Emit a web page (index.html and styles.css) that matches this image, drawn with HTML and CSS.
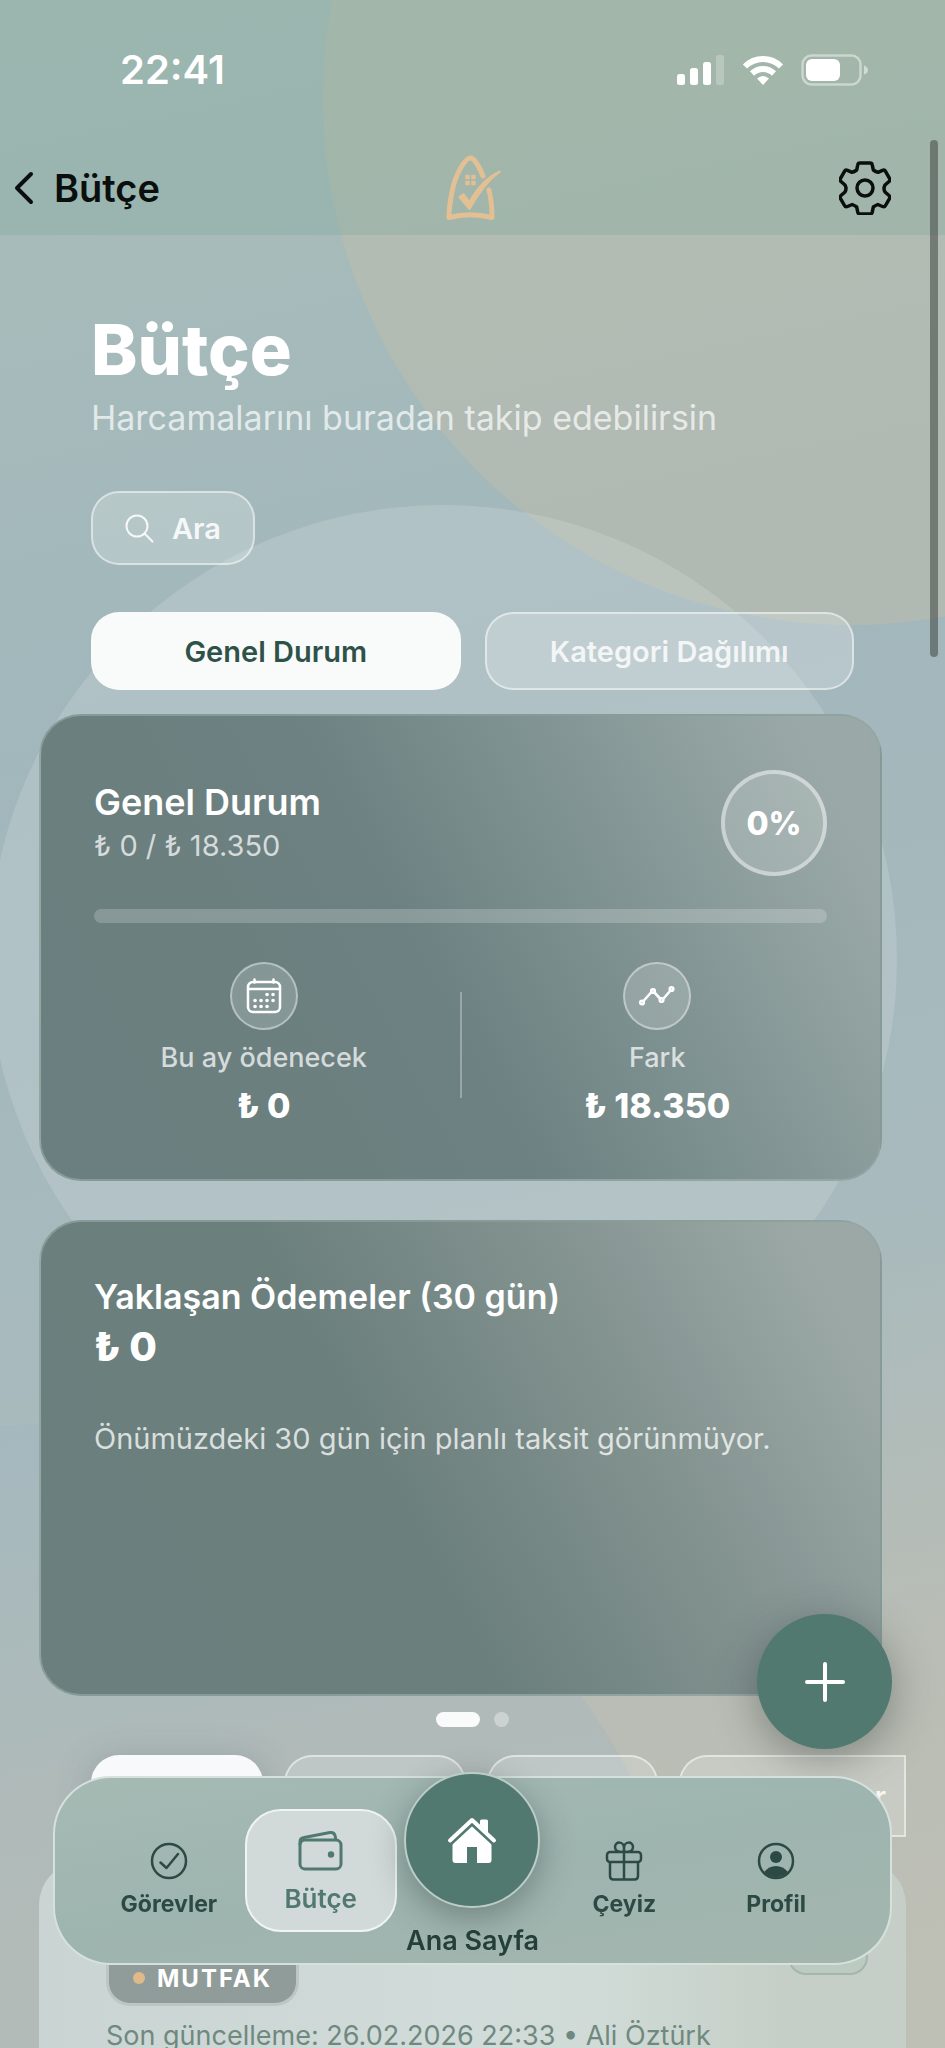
FILE: index.html
```html
<!DOCTYPE html>
<html lang="tr">
<head>
<meta charset="utf-8">
<meta name="viewport" content="width=device-width, initial-scale=1">
<title>Bütçe</title>
<link rel="stylesheet" href="styles.css">
</head>
<body>
<div class="screen">
  <div class="bubble bubble-sand"></div>
  <div class="bubble bubble-light"></div>
  <div class="bubble bubble-blue"></div>

  <header class="topbar">
    <div class="status">
      <span class="clock">22:41</span>
      <div class="status-icons">
        <svg width="48" height="31" viewBox="0 0 48 31" fill="#fff">
          <rect x="0" y="19" width="8" height="11" rx="2.5"/>
          <rect x="13" y="13" width="8" height="17" rx="2.5"/>
          <rect x="26" y="7" width="8" height="23" rx="2.5"/>
          <rect x="39" y="0" width="8" height="30" rx="2.5" opacity=".25"/>
        </svg>
        <svg width="42" height="31" viewBox="0 0 42 31">
          <path d="M3 11.5C13 1.5 29 1.500 39 11.500" fill="none" stroke="#fff" stroke-width="6"/>
          <path d="M10 18.500C16.500 12.500 25.500 12.500 32 18.500" fill="none" stroke="#fff" stroke-width="6"/>
          <path d="M15 23.500Q21 18.500 27 23.500L21 30Z" fill="#fff"/>
        </svg>
        <svg width="68" height="32" viewBox="0 0 68 32">
          <rect x="1.500" y="1.500" width="58" height="29" rx="9" fill="none" stroke="#fff" stroke-opacity=".45" stroke-width="2.500"/>
          <rect x="5" y="5" width="34" height="22" rx="6" fill="#fff"/>
          <path d="M63 11.500q4 1.500 4 4.500t-4 4.500z" fill="#fff" fill-opacity=".5"/>
        </svg>
      </div>
    </div>
    <div class="navbar">
      <button class="back" type="button">
        <svg width="20" height="34" viewBox="0 0 20 34" fill="none" stroke="currentColor" stroke-width="4" stroke-linecap="round" stroke-linejoin="round"><path d="M17 3L3 17l14 14"/></svg>
        <span>Bütçe</span>
      </button>
      <svg class="logo" width="56" height="68" viewBox="0 0 56 68" fill="none" stroke="#e3bf94" stroke-linejoin="round" stroke-linecap="round">
        <path d="M38 22C34 12 29 4 25.500 4C20 4 10 21 7 38C4.500 50 4 58 4 63.500Q25 58 47 63.500Q47 48 44 36" stroke-width="5"/>
        <path d="M14.500 43L18.500 40L24.500 48C30 38 40 24 55 17.500C43 26 33 40 24.500 55Z" fill="#e3bf94" stroke-width="2"/>
        <path d="M22.500 23v.1M28.500 23v.1M22.500 29v.1M28.500 29v.1" stroke-width="4.500" stroke-linecap="square"/>
      </svg>
      <button class="settings" type="button" aria-label="Ayarlar">
        <svg width="52" height="54" viewBox="0 0 52 54" fill="none" stroke="currentColor" stroke-width="3.500" stroke-linejoin="round"><path d="M21 2h10q2 0 2.300 2l1 5q2.500 1.800 4.700 2.300l4.500-2q2-.8 3 1l4 7.200q1 1.800-.5 3l-4 3.500q-1 2-1 3.500t1 3.500l4 3.500q1.500 1.200.5 3l-4 7q-1 1.800-3 1l-4.700-2q-2.500 1-4.500 2.500l-1 5q-.3 2-2.300 2H21q-2 0-2.300-2l-1-5q-2-1.500-4.500-2.500l-4.700 2q-2 .8-3-1l-4-7q-1-1.800.5-3l4-3.500q1-2 1-3.500t-1-3.500l-4-3.500q-1.500-1.200-.5-3l4-7.200q1-1.800 3-1l4.500 2q2.200-.5 4.700-2.300l1-5Q19 2 21 2Z"/><circle cx="26" cy="27" r="8"/></svg>
      </button>
    </div>
  </header>

  <main class="content">
    <section class="intro">
      <h1>Bütçe</h1>
      <p>Harcamalarını buradan takip edebilirsin</p>
      <button class="search" type="button">
        <svg width="29" height="29" viewBox="0 0 29 29" fill="none" stroke="currentColor" stroke-width="2" stroke-linecap="round"><circle cx="12" cy="12" r="10.500"/><path d="M19.500 19.500L27.500 27.500"/></svg>
        <span>Ara</span>
      </button>
      <div class="tabs">
        <button class="tab tab-active" type="button">Genel Durum</button>
        <button class="tab" type="button">Kategori Dağılımı</button>
      </div>
    </section>

    <section class="card overview">
      <div class="overview-head">
        <div>
          <h2>Genel Durum</h2>
          <p>₺ 0 / ₺ 18.350</p>
        </div>
        <div class="percent">0%</div>
      </div>
      <div class="bar"></div>
      <div class="stats">
        <div class="stat">
          <span class="stat-icon">
            <svg width="36" height="36" viewBox="0 0 36 36" fill="none" stroke="#fff" stroke-width="2.500" stroke-linecap="round"><rect x="2" y="4" width="32" height="30" rx="5"/><path d="M2 11h32M8.500 1.500v3M27.500 1.500v3"/><path d="M21 16.500h.1M27 16.500h.1M9 22.500h.1M15 22.500h.1M21 22.500h.1M27 22.500h.1M9 28.500h.1M15 28.500h.1M21 28.500h.1" stroke-width="3.600"/></svg>
          </span>
          <span class="stat-label">Bu ay ödenecek</span>
          <strong>₺ 0</strong>
        </div>
        <div class="divider"></div>
        <div class="stat">
          <span class="stat-icon">
            <svg width="36" height="36" viewBox="0 0 36 36" fill="none" stroke="#fff" stroke-width="2.600" stroke-linecap="round" stroke-linejoin="round"><path d="M4.500 23L12 14.500M15.500 14.500L21 20.500M24.500 20.500L31.500 12.500"/><circle cx="3" cy="24.500" r="1.800"/><circle cx="14" cy="13" r="1.800"/><circle cx="22.500" cy="22" r="1.800"/><circle cx="32.500" cy="11" r="1.800"/></svg>
          </span>
          <span class="stat-label">Fark</span>
          <strong>₺ 18.350</strong>
        </div>
      </div>
    </section>

    <section class="card upcoming">
      <h2>Yaklaşan Ödemeler (30 gün)</h2>
      <strong>₺ 0</strong>
      <p>Önümüzdeki 30 gün için planlı taksit görünmüyor.</p>
    </section>

    <div class="dots"><span class="dot dot-active"></span><span class="dot"></span></div>

    <div class="chips">
      <button class="chip chip-active" type="button" aria-label="Filtre 1"></button>
      <button class="chip" type="button" aria-label="Filtre 2"></button>
      <button class="chip chip-short" type="button" aria-label="Filtre 3"></button>
      <button class="chip chip-last" type="button">r</button>
    </div>

    <article class="entry">
      <div class="entry-head">
        <span class="badge"><i></i>MUTFAK</span>
        <span class="pill"></span>
      </div>
      <p>Son güncelleme: 26.02.2026 22:33 • Ali Öztürk</p>
    </article>
  </main>

  <div class="scrollbar"></div>

  <button class="fab" type="button" aria-label="Ekle">
    <svg width="40" height="40" viewBox="0 0 40 40" stroke="#fff" stroke-width="4" stroke-linecap="round"><path d="M20 2v36M2 20h36"/></svg>
  </button>

  <nav class="dock">
    <a class="item" href="#gorevler">
      <svg width="40" height="40" viewBox="0 0 40 40" fill="none" stroke="currentColor" stroke-width="2.500" stroke-linecap="round" stroke-linejoin="round"><circle cx="20" cy="20" r="17"/><path d="M11.500 21.500l6 5.500L29 13"/></svg>
      <span>Görevler</span>
    </a>
    <a class="item item-active" href="#butce">
      <svg width="46" height="42" viewBox="0 0 46 42" fill="none" stroke="currentColor" stroke-width="3" stroke-linejoin="round"><rect x="2" y="10" width="41" height="29" rx="5"/><path d="M2 15V12q0-4 4-4.500L32 2.500q4-.5 5 3L38 10"/><circle cx="33" cy="24.500" r="3.200" fill="currentColor" stroke="none"/></svg>
      <span>Bütçe</span>
    </a>
    <a class="item item-home" href="#ana">
      <span class="home">
        <svg width="50" height="48" viewBox="0 0 50 48" fill="#fff"><path d="M33 9V5q0-1.500 1.500-1.500h5Q41 3.500 41 5v12Z"/><path d="M3 24.500L25 4L47 24.500" fill="none" stroke="#fff" stroke-width="4" stroke-linecap="round" stroke-linejoin="round"/><path d="M25 9L44.500 27V44q0 3-3 3H30V31H20V47H8.500q-3 0-3-3V27Z"/><path d="M4 28.500L25 9L46 28.500" fill="none" stroke="#52796f" stroke-width="2"/></svg>
      </span>
      <span>Ana Sayfa</span>
    </a>
    <a class="item" href="#ceyiz">
      <svg width="40" height="40" viewBox="0 0 40 40" fill="none" stroke="currentColor" stroke-width="2.500" stroke-linejoin="round"><rect x="3" y="11" width="34" height="10" rx="3"/><path d="M6 21v14q0 3.500 3.500 3.500h21q3.500 0 3.500-3.500V21M20 11v27M20 11c-6 0-9-1-9-5 0-6 9-6 9 1zM20 11c6 0 9-1 9-5 0-6-9-6-9 1z"/></svg>
      <span>Çeyiz</span>
    </a>
    <a class="item" href="#profil">
      <svg width="40" height="40" viewBox="0 0 40 40" fill="currentColor"><circle cx="20" cy="20" r="17" fill="none" stroke="currentColor" stroke-width="2.500"/><circle cx="20" cy="16" r="6"/><path d="M8 31q5-6 12-6t12 6a16.500 16.500 0 0 1-24 0z"/></svg>
      <span>Profil</span>
    </a>
  </nav>
</div>
</body>
</html>
```
FILE: styles.css
```css
* { box-sizing: border-box; }

body {
  margin: 0;
  font-family: Inter, "Noto Sans", "Liberation Sans", sans-serif;
  background: #a6b9bd;
}

h1, h2, p { margin: 0; }
button { font: inherit; color: inherit; cursor: pointer; }
svg { display: block; flex: none; }

.screen {
  position: relative;
  height: 100vh;
  overflow: hidden;
  background: linear-gradient(168deg, #a9bdb9 0%, #a2b7bc 34%, #a8babd 62%, #b9bdb5 82%, #bfc0b5 100%);
}

.bubble { position: absolute; border-radius: 50%; }
.bubble-sand { width: 1054px; height: 1054px; right: -432px; top: -429px; background: rgba(212, 193, 158, .28); }
.bubble-light { width: 908px; height: 908px; left: -11px; top: 505px; background: rgba(255, 255, 255, .14); }
.bubble-blue { width: 1310px; height: 1310px; left: -605px; top: 1424px; background: rgba(150, 178, 198, .24); }

.topbar { position: relative; height: 235px; background: rgba(128, 167, 156, .32); }
.status {
  display: flex;
  align-items: center;
  justify-content: space-between;
  height: 140px;
  padding: 0 76px 0 120px;
  color: #fff;
}
.clock { font-size: 40px; font-weight: 600; line-height: 48px; }
.status-icons { display: flex; align-items: center; gap: 17px; }
.navbar {
  display: grid;
  grid-template-columns: 1fr auto 1fr;
  align-items: center;
  height: 95px;
  padding: 0 14px;
}
.back, .settings { border: 0; padding: 0; background: none; color: #0a0f0e; }
.back { display: flex; align-items: center; gap: 20px; font-size: 38px; font-weight: 600; }
.settings { justify-self: end; margin-right: 40px; }

.content { position: relative; padding: 75px 39px 0; }
.intro { padding: 0 52px; color: #fff; }
.intro h1 { font-size: 70px; font-weight: 800; line-height: 80px; }
.intro p { margin-top: 6px; font-size: 34px; line-height: 44px; color: rgba(255, 255, 255, .7); }
.search {
  display: flex;
  align-items: center;
  gap: 18px;
  height: 74px;
  margin-top: 51px;
  padding: 0 32px;
  border: 2px solid rgba(255, 255, 255, .5);
  border-radius: 28px;
  background: rgba(255, 255, 255, .2);
  color: rgba(255, 255, 255, .88);
  font-size: 29px;
  font-weight: 600;
}
.tabs { display: grid; grid-template-columns: 1fr 1fr; gap: 24px; margin-top: 47px; }
.tab {
  height: 78px;
  border: 2px solid rgba(255, 255, 255, .5);
  border-radius: 28px;
  background: rgba(255, 255, 255, .22);
  color: rgba(255, 255, 255, .82);
  font-size: 29px;
  font-weight: 600;
}
.tab-active { border: 0; background: #f9fbfb; color: #2f5248; }

.card {
  margin-right: 24px;
  border: 2px solid rgba(146, 166, 163, .7);
  border-radius: 42px;
  color: #fff;
}
.overview {
  height: 467px;
  margin-top: 24px;
  padding: 54px 53px 0;
  background: linear-gradient(62deg, #6b7f80 0%, #6b7f7f 25%, #6d8182 46%, #839695 70%, #9aa9a7 92%);
}
.overview-head { display: flex; align-items: center; justify-content: space-between; height: 106px; }
.overview-head h2 { font-size: 36px; font-weight: 600; line-height: 46px; }
.overview-head p { font-size: 29px; line-height: 42px; color: rgba(255, 255, 255, .72); }
.percent {
  display: grid;
  place-items: center;
  width: 106px;
  height: 106px;
  border: 4px solid rgba(255, 255, 255, .45);
  border-radius: 50%;
  background: rgba(255, 255, 255, .16);
  font-size: 32px;
  font-weight: 800;
}
.bar { height: 14px; margin-top: 33px; border-radius: 7px; background: rgba(255, 255, 255, .2); }
.stats { display: grid; grid-template-columns: 1fr 2px 1fr; column-gap: 26px; align-items: center; margin-top: 39px; }
.stat { display: flex; flex-direction: column; align-items: center; }
.stat-icon {
  display: grid;
  place-items: center;
  width: 68px;
  height: 68px;
  border: 2px solid rgba(255, 255, 255, .4);
  border-radius: 50%;
  background: rgba(255, 255, 255, .18);
}
.stat-label { margin-top: 10px; font-size: 27px; font-weight: 500; line-height: 36px; color: rgba(255, 255, 255, .72); }
.stat strong { margin-top: 8px; font-size: 34px; font-weight: 800; line-height: 44px; }
.divider { height: 106px; background: rgba(255, 255, 255, .3); }

.upcoming {
  height: 476px;
  margin-top: 39px;
  padding: 52px 53px 0;
  background: linear-gradient(62deg, #6b7f7e 0%, #6b7f7d 42%, #82928f 68%, #9ba8a6 92%);
}
.upcoming h2 { font-size: 34px; font-weight: 600; line-height: 46px; }
.upcoming strong { display: block; margin-top: 3px; font-size: 40px; font-weight: 800; line-height: 48px; }
.upcoming p { margin-top: 48px; font-size: 29px; line-height: 40px; color: rgba(255, 255, 255, .75); }

.dots { display: flex; justify-content: center; gap: 14px; margin-top: 16px; }
.dot { width: 15px; height: 15px; border-radius: 8px; background: rgba(255, 255, 255, .35); }
.dot-active { width: 44px; background: #f9fbfa; }

.chips { display: flex; gap: 21px; margin-top: 28px; padding-left: 52px; }
.chip {
  flex: none;
  width: 182px;
  height: 82px;
  border: 2px solid rgba(255, 255, 255, .5);
  border-radius: 28px;
  background: rgba(255, 255, 255, .2);
}
.chip-active { width: 172px; border: 0; background: #f7f9fa; box-shadow: 0 4px 36px rgba(60, 75, 80, .22); }
.chip-short { width: 171px; }
.chip-last {
  flex: 1;
  min-width: 0;
  padding: 0 18px;
  border-radius: 28px 0 0 28px;
  color: rgba(255, 255, 255, .85);
  font-size: 29px;
  font-weight: 600;
  text-align: right;
}

.entry {
  height: 400px;
  margin-top: 24px;
  padding: 78px 38px 0 67px;
  border-radius: 44px;
  background: linear-gradient(90deg, #cad5d3 0%, #d1dcda 50%, #d0dbd7 65%, #c6cfc7 85%);
}
.entry-head { display: flex; justify-content: space-between; align-items: flex-start; }
.badge {
  display: flex;
  align-items: center;
  gap: 12px;
  height: 67px;
  padding: 11px 24px 0;
  border: 3px solid #bcc7c5;
  border-radius: 24px;
  background: #909c99;
  color: #fff;
  font-size: 24px;
  font-weight: 700;
  letter-spacing: 2px;
}
.badge i { width: 12px; height: 12px; border-radius: 50%; background: #e0b98a; }
.pill { width: 80px; height: 36px; border: 2px solid #a5b5ad; border-radius: 24px; background: #bccbc2; }
.entry p { margin-top: 10px; font-size: 27px; line-height: 40px; color: #70897f; }

.scrollbar { position: absolute; right: 7px; top: 140px; width: 8px; height: 517px; border-radius: 4px; background: rgba(70, 75, 70, .58); }

.fab {
  position: fixed;
  right: 53px;
  bottom: 299px;
  display: grid;
  place-items: center;
  width: 135px;
  height: 135px;
  border: 0;
  border-radius: 50%;
  background: #52796f;
  box-shadow: 0 10px 44px rgba(40, 50, 50, .4);
}

.dock {
  position: fixed;
  left: 53px;
  right: 53px;
  bottom: 83px;
  display: grid;
  grid-template-columns: repeat(5, 1fr);
  height: 189px;
  padding: 0 38px;
  border: 2px solid rgba(218, 230, 226, .9);
  border-radius: 58px;
  background: linear-gradient(170deg, #a5bab3 0%, #9eb4af 50%, #a4b6ae 100%);
}
.item {
  display: flex;
  flex-direction: column;
  align-items: center;
  gap: 6px;
  padding-top: 63px;
  color: #2c4a43;
  font-size: 23px;
  font-weight: 700;
  line-height: 34px;
  text-decoration: none;
}
.item-active {
  height: 123px;
  margin-top: 31px;
  gap: 10px;
  padding-top: 19px;
  border: 2px solid #f0f4f3;
  border-radius: 36px;
  background: #d1dad9;
  color: #52796f;
  font-size: 26px;
  font-weight: 600;
}
.item-home { gap: 16px; padding-top: 0; color: #243f38; font-size: 27px; font-weight: 600; white-space: nowrap; }
.home {
  display: grid;
  place-items: center;
  width: 136px;
  height: 136px;
  margin-top: -6px;
  border: 2px solid #bcccc7;
  border-radius: 50%;
  background: #52796f;
  box-shadow: 0 10px 34px rgba(40, 60, 55, .4);
}
```
